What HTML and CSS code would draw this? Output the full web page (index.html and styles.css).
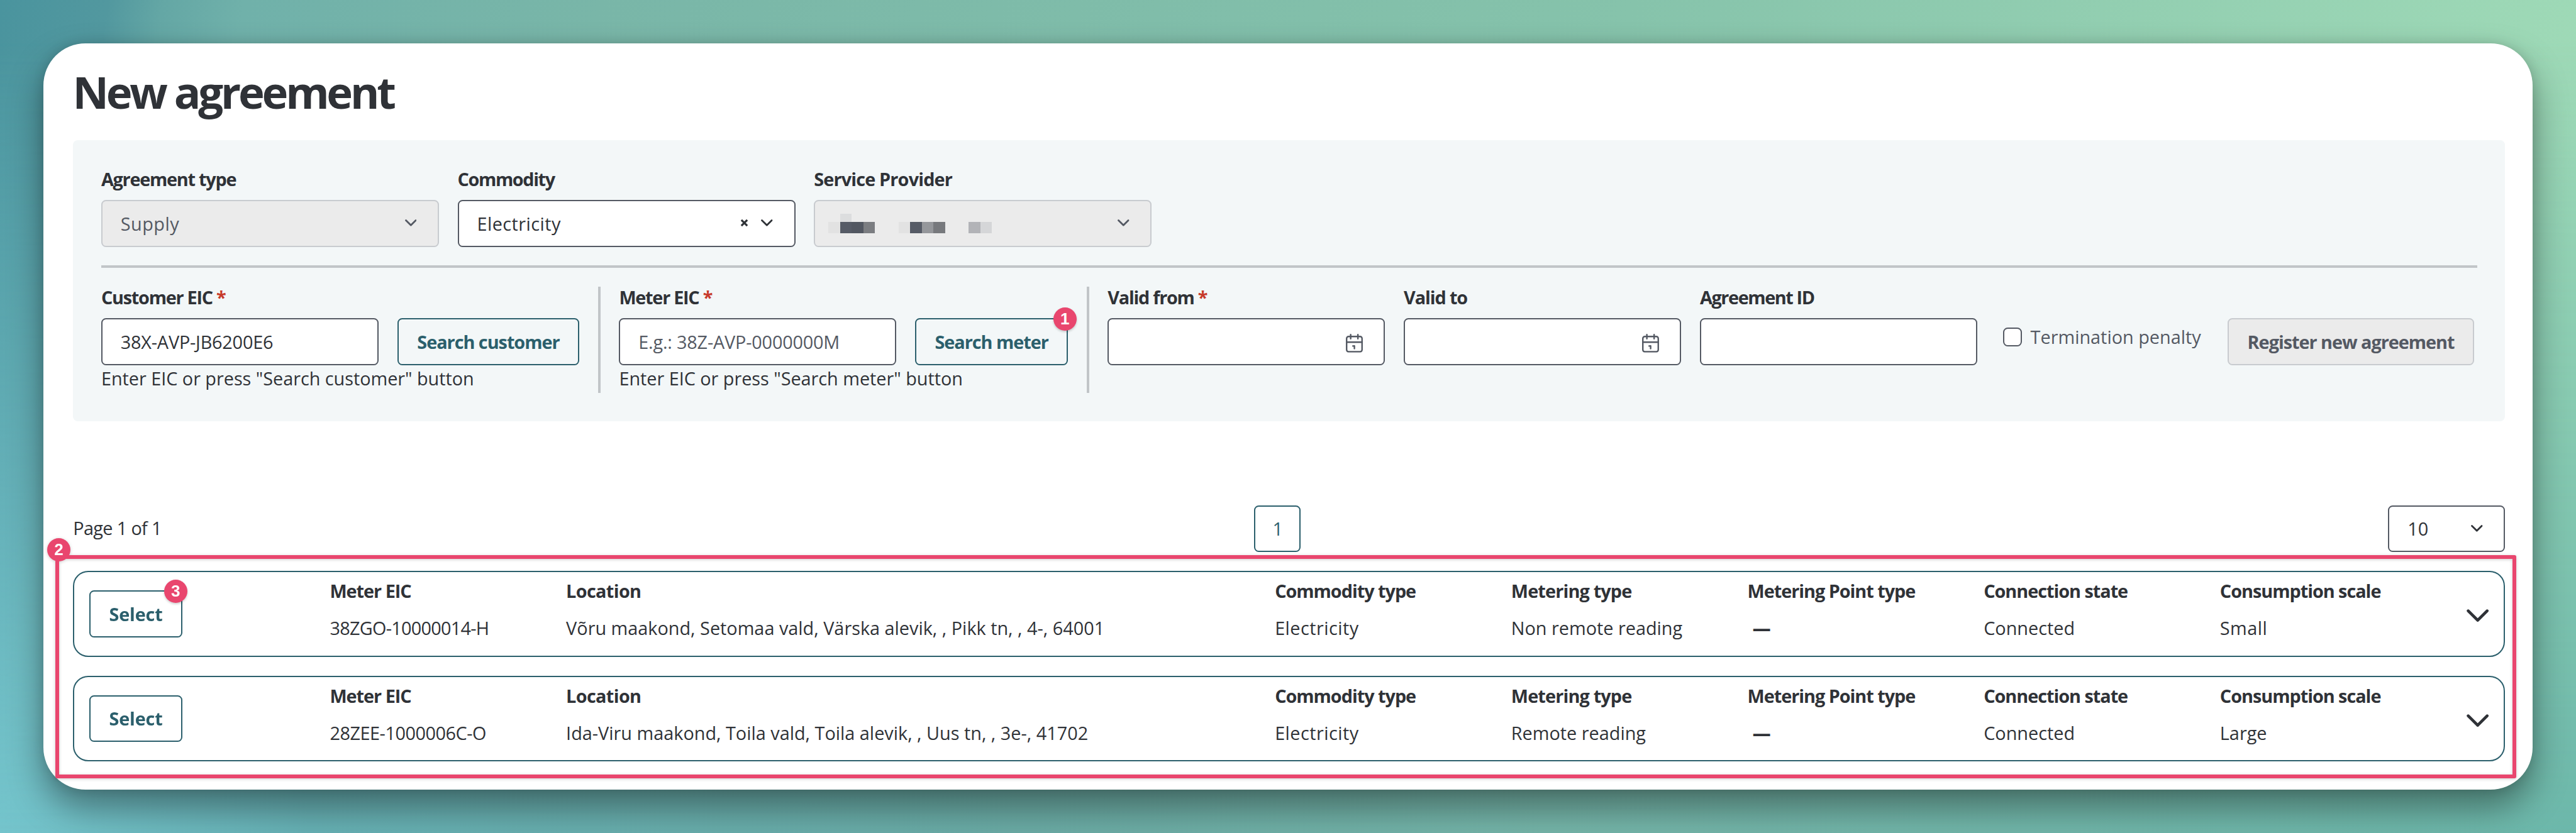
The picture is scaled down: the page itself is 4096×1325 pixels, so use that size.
FILE: index.html
```html
<!DOCTYPE html>
<html lang="en">
<head>
<meta charset="utf-8">
<title>New agreement</title>
<link rel="stylesheet" href="styles.css">
</head>
<body>
<svg class="defs" aria-hidden="true">
  <symbol id="chevron" viewBox="0 0 20 12"><path d="M1.6 1.6 10 10 18.4 1.6"/></symbol>
  <symbol id="chevron-lg" viewBox="0 0 38 22"><path d="M2.8 2.8 19 19 35.2 2.8"/></symbol>
  <symbol id="clear" viewBox="0 0 14 14"><path d="M2 2 12 12M12 2 2 12"/></symbol>
  <symbol id="calendar" viewBox="0 0 29 32"><rect x="1.3" y="4.6" width="26.4" height="26" rx="3.4"/><path d="M1.3 14.2H27.7M8.2 1.3V8.4M20.6 1.3V8.4"/><path d="M12 20.8 14.6 20.6V25.2"/></symbol>
</svg>
<main class="card">
  <h1>New agreement</h1>

  <section class="panel">
    <div class="row">
      <div class="field wide">
        <div class="label tight">Agreement type</div>
        <div class="control disabled"><span class="value airy">Supply</span><svg class="chev"><use href="#chevron"/></svg></div>
      </div>
      <div class="field wide">
        <div class="label tighter">Commodity</div>
        <div class="control"><span class="value airy">Electricity</span><svg class="clear"><use href="#clear"/></svg><svg class="chev"><use href="#chevron"/></svg></div>
      </div>
      <div class="field wide">
        <div class="label snug">Service Provider</div>
        <div class="control disabled masked">
          <svg class="mask" viewBox="0 0 280 34">
            <rect x="20" y="0" width="20" height="14" fill="#dcddde"/>
            <rect x="0" y="14" width="20" height="20" fill="#e2e2e2"/>
            <rect x="20" y="14" width="20" height="20" fill="#565b66"/>
            <rect x="40" y="14" width="20" height="20" fill="#525761"/>
            <rect x="60" y="14" width="20" height="20" fill="#7b7d81"/>
            <rect x="120" y="14" width="20" height="20" fill="#e2e2e2"/>
            <rect x="140" y="14" width="20" height="20" fill="#565b66"/>
            <rect x="160" y="14" width="20" height="20" fill="#95979b"/>
            <rect x="180" y="14" width="20" height="20" fill="#77797d"/>
            <rect x="240" y="14" width="20" height="20" fill="#b2b3b7"/>
            <rect x="260" y="14" width="20" height="20" fill="#d5d6d8"/>
          </svg>
          <svg class="chev"><use href="#chevron"/></svg>
        </div>
      </div>
    </div>

    <hr>

    <div class="row">
      <div class="lookup">
        <div class="row">
          <div class="field">
            <div class="label tight">Customer EIC <span class="req">*</span></div>
            <div class="control"><span class="value snug">38X-AVP-JB6200E6</span></div>
          </div>
          <div class="btn b-customer">Search customer</div>
        </div>
        <div class="hint">Enter EIC or press "Search customer" button</div>
      </div>
      <div class="vr"></div>
      <div class="lookup">
        <div class="row">
          <div class="field">
            <div class="label tight">Meter EIC <span class="req">*</span></div>
            <div class="control"><span class="value placeholder">E.g.: 38Z-AVP-0000000M</span></div>
          </div>
          <div class="btn b-meter">Search meter<span class="badge">1</span></div>
        </div>
        <div class="hint">Enter EIC or press "Search meter" button</div>
      </div>
      <div class="vr"></div>
      <div class="field">
        <div class="label tight">Valid from <span class="req">*</span></div>
        <div class="control"><span class="value"></span><svg class="cal"><use href="#calendar"/></svg></div>
      </div>
      <div class="field">
        <div class="label">Valid to</div>
        <div class="control"><span class="value"></span><svg class="cal"><use href="#calendar"/></svg></div>
      </div>
      <div class="field">
        <div class="label tighter">Agreement ID</div>
        <div class="control"></div>
      </div>
      <div class="check"><span class="box"></span>Termination penalty</div>
      <div class="btn b-register disabled">Register new agreement</div>
    </div>
  </section>

  <div class="pager">
    <div class="pages">Page 1 of 1</div>
    <div class="btn page">1</div>
    <div class="control size"><span class="value">10</span><svg class="chev"><use href="#chevron"/></svg></div>
  </div>

  <section class="results">
    <div class="highlight"><span class="badge">2</span></div>
    <article class="item">
      <div class="btn b-select">Select<span class="badge">3</span></div>
      <div class="cell"><b>Meter EIC</b><span class="tighter">38ZGO-10000014-H</span></div>
      <div class="cell location"><b class="even">Location</b><span>Võru maakond, Setomaa vald, Värska alevik, , Pikk tn, , 4-, 64001</span></div>
      <div class="cell"><b>Commodity type</b><span class="airy">Electricity</span></div>
      <div class="cell"><b class="snug">Metering type</b><span>Non remote reading</span></div>
      <div class="cell"><b>Metering Point type</b><span class="dash">—</span></div>
      <div class="cell"><b>Connection state</b><span>Connected</span></div>
      <div class="cell"><b>Consumption scale</b><span class="airy">Small</span></div>
      <svg class="expand"><use href="#chevron-lg"/></svg>
    </article>
    <article class="item">
      <div class="btn b-select">Select</div>
      <div class="cell"><b>Meter EIC</b><span class="tight">28ZEE-1000006C-O</span></div>
      <div class="cell location"><b class="even">Location</b><span>Ida-Viru maakond, Toila vald, Toila alevik, , Uus tn, , 3e-, 41702</span></div>
      <div class="cell"><b>Commodity type</b><span class="airy">Electricity</span></div>
      <div class="cell"><b class="snug">Metering type</b><span>Remote reading</span></div>
      <div class="cell"><b>Metering Point type</b><span class="dash">—</span></div>
      <div class="cell"><b>Connection state</b><span>Connected</span></div>
      <div class="cell"><b>Consumption scale</b><span>Large</span></div>
      <svg class="expand"><use href="#chevron-lg"/></svg>
    </article>
  </section>
</main>
</body>
</html>
```
FILE: styles.css
```css
:root {
  --ink: #2f3237;
  --muted: #545963;
  --teal: #2b5f6c;
  --pink: #e9466e;
  --line: #c1c5c8;
}
* { box-sizing: border-box; }
html { font-size: 9.3049px; }
body {
  margin: 0;
  height: 142.4rem;
  overflow: hidden;
  padding: 7.4rem;
  position: relative;
  font: 420 3.1rem/3.6rem "Open Sans", "Noto Sans", sans-serif;
  color: var(--ink);
  background: linear-gradient(100deg, #4a949e 0, #52989f 4%, #64a7a5 6%, #70b1aa 9%, #79b6a8 22%, #86c3ab 60%, #9fdab7 96%);
}
body::before {
  content: "";
  position: absolute;
  inset: 0;
  background: linear-gradient(90deg, #74c4cc 0, #66b0b4 12%, #6aaba5 40%, #74b4a8 60%, #6cb7aa 100%);
  -webkit-mask-image: linear-gradient(transparent 5%, #000 100%);
  mask-image: linear-gradient(transparent 5%, #000 100%);
}
.defs { position: absolute; width: 0; height: 0; }
svg { fill: none; stroke: currentColor; stroke-linecap: round; stroke-linejoin: round; flex: none; display: block; }

.card {
  position: relative;
  height: 127.6rem;
  padding: 3.2rem 4.7rem 0 5.1rem;
  border-radius: 7.2rem;
  background: #fff;
  box-shadow: 0 3rem 6rem rgba(0, 0, 0, .4), 0 0 2rem rgba(0, 0, 0, .12);
}
h1 {
  margin: 0 0 3.4rem -.1rem;
  font-size: 7.6rem;
  line-height: 10rem;
  font-weight: 700;
  letter-spacing: -.45rem;
}

.panel { height: 48rem; padding: 4.8rem; border-radius: .8rem; background: #f3f7f8; }
.row { display: flex; gap: 3.2rem; align-items: flex-start; }
.field { width: 47.4rem; }
.field.wide { width: 57.7rem; }
.label { margin-bottom: 1.8rem; font-weight: 700; letter-spacing: -.12rem; white-space: nowrap; }
.req { color: #c73a2b; }
.control {
  display: flex;
  align-items: center;
  height: 8rem;
  padding: 0 3.6rem 0 3.1rem;
  border: 2px solid var(--muted);
  border-radius: .8rem;
  background: #fff;
}
.value { flex: 1; white-space: nowrap; }
.placeholder { color: var(--muted); letter-spacing: -.02rem; }
.disabled { color: var(--muted); background: #ebebeb; border-color: #c8cbcf; }
.masked { justify-content: space-between; padding-left: 2.2rem; }
.mask { width: 28rem; height: 3.4rem; stroke: none; shape-rendering: crispEdges; }
.chev { width: 2rem; height: 1.2rem; margin-bottom: .2rem; stroke-width: 3; }
.clear { width: 1.4rem; height: 1.4rem; margin: 0 2.2rem .2rem 0; stroke-width: 3.4; stroke-linecap: butt; }
.cal { width: 2.9rem; height: 3.2rem; margin-top: .5rem; color: var(--muted); stroke-width: 2.6; }

hr { height: .4rem; margin: 3.2rem 0; border: 0; background: var(--line); }
.vr { width: .4rem; height: 18.2rem; background: var(--line); }
.lookup .row { align-items: flex-end; }
.hint { height: 4.8rem; line-height: 4.5rem; letter-spacing: -.003rem; white-space: nowrap; }

.btn {
  position: relative;
  display: flex;
  align-items: center;
  justify-content: center;
  height: 8rem;
  border: 2px solid var(--teal);
  border-radius: .8rem;
  color: var(--teal);
  font-weight: 700;
  letter-spacing: -.11rem;
  white-space: nowrap;
}
.btn.disabled { color: var(--muted); border-color: #c8cbcf; }
.b-customer { width: 31.1rem; }
.b-meter { width: 26.1rem; }
.b-register { width: 42.1rem; margin-top: 5.4rem; }
.b-select { width: 15.8rem; align-self: center; letter-spacing: -.02rem; }
.check {
  display: flex;
  align-items: center;
  gap: 1.5rem;
  width: 35.2rem;
  height: 4rem;
  margin: 6.6rem 0 0 1.2rem;
  color: var(--muted);
  white-space: nowrap;
}
.box { width: 3.2rem; height: 3.2rem; border: 2px solid var(--muted); border-radius: .8rem; background: #fff; }

.pager { display: flex; justify-content: space-between; align-items: center; margin: 14.4rem 0 3.2rem; }
.pages { width: 16rem; padding-bottom: .4rem; letter-spacing: -.07rem; }
.page { width: 8rem; font-weight: 420; }
.size { width: 20rem; }

.results { position: relative; display: grid; gap: 3.2rem; }
.item {
  display: grid;
  grid-template-columns: 41.05rem repeat(9, 40.375rem) 1fr;
  height: 14.7rem;
  padding-left: 2.6rem;
  border: 2px solid var(--teal);
  border-radius: 2.6rem;
}
.cell { display: flex; flex-direction: column; gap: 2.75rem; padding-top: 1.4rem; white-space: nowrap; }
.cell b { font-weight: 700; letter-spacing: -.11rem; }
.location { grid-column: span 3; }
.dash { padding-left: .9rem; font-weight: 800; }
.expand { width: 3.8rem; height: 2.2rem; margin: 0 0 0 1.8rem; align-self: center; position: relative; top: .3rem; stroke-width: 5; }

.highlight {
  position: absolute;
  inset: -2.75rem -1.9rem -2.9rem -3rem;
  border: 6px solid var(--pink);
  border-radius: .3rem;
  filter: drop-shadow(0 .2rem .3rem rgba(0, 0, 0, .2));
}
.badge {
  position: absolute;
  top: -2.1rem;
  right: -1.7rem;
  width: 4rem;
  height: 4rem;
  border-radius: 50%;
  background: var(--pink);
  color: #fff;
  font: 700 2.8rem/4rem "Liberation Sans", Arial, sans-serif;
  text-align: center;
  letter-spacing: 0;
  box-shadow: 0 .2rem .4rem rgba(0, 0, 0, .2);
}
.highlight .badge { top: -3.5rem; right: auto; left: -2.1rem; box-shadow: none; }
.b-select .badge { right: -1.1rem; }

/* tracking */
.tight { letter-spacing: -.05rem; }
.tighter { letter-spacing: -.078rem; }
.snug { letter-spacing: -.022rem; }
.airy { letter-spacing: .05rem; }
.label.tight { letter-spacing: -.135rem; }
.label.tighter { letter-spacing: -.15rem; }
.label.snug, .cell b.snug { letter-spacing: -.09rem; }
.cell b.even { letter-spacing: -.07rem; }
```
